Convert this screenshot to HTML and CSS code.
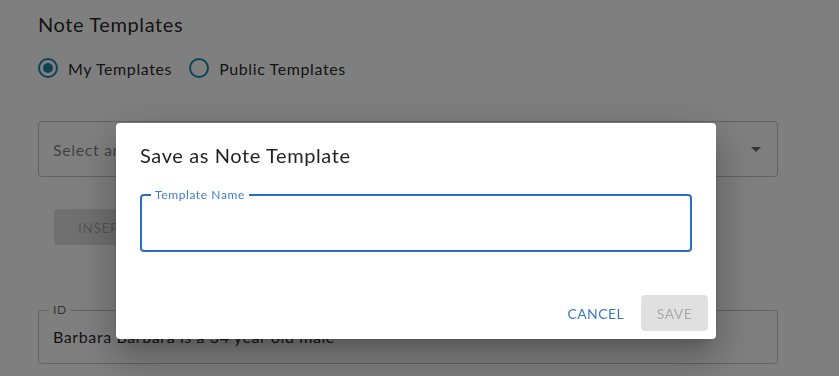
FILE: index.html
```html
<!DOCTYPE html>
<html lang="en">
<head>
    <meta charset="UTF-8">
    <meta name="viewport" content="width=device-width, initial-scale=1.0">
    <title>Note Templates</title>
    <link rel="stylesheet" href="styles.css">
</head>
<body>

<div class="page">
    <h1 class="page-title">Note Templates</h1>

    <div class="radio-row">
        <label class="radio checked"><span class="radio-mark"></span>My Templates</label>
        <label class="radio"><span class="radio-mark"></span>Public Templates</label>
    </div>

    <div class="select-field">
        <span class="select-placeholder">Select an existing template</span>
        <span class="select-arrow"></span>
    </div>

    <button type="button" class="btn-disabled insert-btn" disabled>Insert Template</button>

    <fieldset class="outlined">
        <legend>ID</legend>
        <div class="outlined-value">Barbara Barbara is a 34 year old male</div>
    </fieldset>
</div>

<!-- modal -->
<div class="backdrop"></div>
<div class="dialog">
    <h2 class="dialog-title">Save as Note Template</h2>
    <div class="dialog-content">
        <fieldset class="outlined focused">
            <legend>Template Name</legend>
            <input type="text" class="outlined-input">
        </fieldset>
    </div>
    <div class="dialog-actions">
        <button type="button" class="btn-text">Cancel</button>
        <button type="button" class="btn-disabled" disabled>Save</button>
    </div>
</div>

</body>
</html>
```

FILE: styles.css
```css
body {
    font-family: Lato, "Noto Sans", sans-serif;
    letter-spacing: 0.6px;
    margin: 0;
    padding: 0;
    background-color: #ffffff;
    color: rgba(0, 0, 0, 0.87);
    height: 100vh;
    overflow: hidden;
}

.page {
    padding: 12px 61px 0 38px;
}

.page-title {
    font-size: 20px;
    font-weight: 400;
    line-height: 24px;
    margin: 0;
}

.radio-row {
    display: flex;
    gap: 17px;
    margin-top: 20px;
    height: 24px;
    align-items: center;
}

.radio {
    display: flex;
    align-items: center;
    gap: 10px;
    font-size: 16px;
}

.radio-mark {
    width: 20px;
    height: 20px;
    border: 2px solid #1c86ad;
    border-radius: 50%;
    box-sizing: border-box;
    display: flex;
    align-items: center;
    justify-content: center;
}

.radio.checked .radio-mark::after {
    content: "";
    width: 10px;
    height: 10px;
    border-radius: 50%;
    background-color: #1c86ad;
}

.select-field {
    margin-top: 41px;
    height: 56px;
    border: 1px solid rgba(0, 0, 0, 0.23);
    border-radius: 4px;
    box-sizing: border-box;
    display: flex;
    align-items: center;
    justify-content: space-between;
    padding: 0 14px;
}

.select-placeholder {
    font-size: 16px;
    color: rgba(0, 0, 0, 0.5);
}

.select-arrow {
    width: 0;
    height: 0;
    border-left: 5px solid transparent;
    border-right: 5px solid transparent;
    border-top: 5px solid rgba(0, 0, 0, 0.6);
    margin-right: 2px;
}

.btn-disabled {
    font-family: inherit;
    font-size: 14px;
    letter-spacing: 0.4px;
    text-transform: uppercase;
    border: none;
    border-radius: 4px;
    background-color: rgba(0, 0, 0, 0.12);
    color: rgba(0, 0, 0, 0.26);
    height: 36px;
    padding: 0 16px;
}

.insert-btn {
    display: block;
    margin: 32px 0 0 16px;
    padding: 0 24px;
}

.outlined {
    margin: 0;
    border: 1px solid rgba(0, 0, 0, 0.23);
    border-radius: 4px;
    padding: 0 14px;
    height: 56px;
    box-sizing: border-box;
    position: relative;
}

.page .outlined {
    height: 60px;
    margin-top: 59px;
}

.outlined legend {
    font-size: 12px;
    color: rgba(0, 0, 0, 0.6);
    padding: 0 4px;
    margin-left: -4px;
    line-height: 12px;
}

.outlined-value {
    font-size: 16px;
    padding-top: 11px;
}

/* modal */
.backdrop {
    position: fixed;
    inset: 0;
    background-color: rgba(0, 0, 0, 0.5);
}

.dialog {
    position: fixed;
    left: 116px;
    top: 123px;
    width: 600px;
    height: 216px;
    background-color: #ffffff;
    border-radius: 4px;
    box-shadow: 0px 11px 15px -7px rgba(0, 0, 0, 0.2), 0px 24px 38px 3px rgba(0, 0, 0, 0.14), 0px 9px 46px 8px rgba(0, 0, 0, 0.12);
    display: flex;
    flex-direction: column;
}

.dialog-title {
    font-size: 20px;
    font-weight: 400;
    line-height: 32px;
    margin: 0;
    padding: 16px 24px;
}

.dialog-content {
    padding: 0 24px;
}

.dialog .outlined {
    margin-top: 2px;
    height: 63px;
    border: 2px solid #2b6cc4;
    padding: 0 13px;
}

.dialog .outlined legend {
    color: #3f7dd0;
}

.outlined-input {
    width: 100%;
    border: none;
    outline: none;
    font-family: inherit;
    font-size: 16px;
    height: 36px;
    padding: 0;
}

.dialog-actions {
    margin-top: auto;
    display: flex;
    justify-content: flex-end;
    gap: 9px;
    padding: 8px;
}

.btn-text {
    font-family: inherit;
    font-size: 14px;
    letter-spacing: 0.4px;
    text-transform: uppercase;
    border: none;
    background: none;
    color: #3b78c8;
    height: 36px;
    padding: 0 8px;
}

.dialog-actions .btn-disabled {
    width: 67px;
    padding: 0;
}
```
